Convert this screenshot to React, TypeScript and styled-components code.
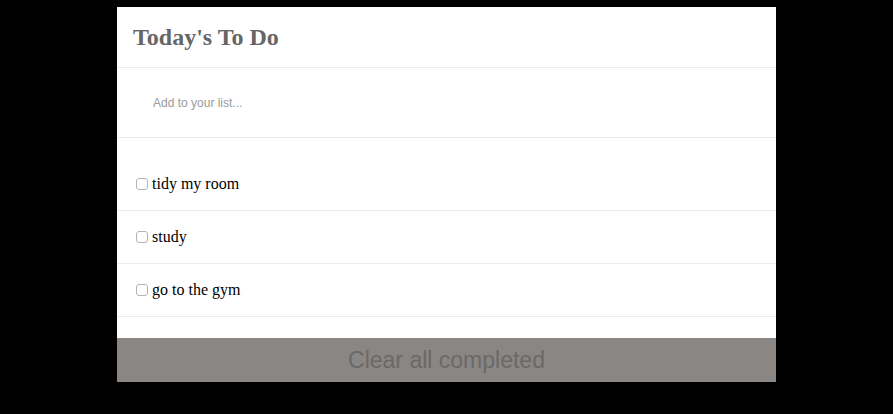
import React from "react";
import styled, { createGlobalStyle } from "styled-components";

const GlobalStyle = createGlobalStyle`
  html, body {
    margin: 0;
    padding: 0;
    background: #000;
  }
  body {
    font-family: "Liberation Serif", "Times New Roman", serif;
  }
`;

const Page = styled.div`
  display: flex;
  justify-content: center;
  align-items: flex-start;
  padding-top: 7px;
  min-height: 414px;
  box-sizing: border-box;
`;

const Card = styled.div`
  width: 659px;
  background: #fff;
  display: flex;
  flex-direction: column;
`;

const Header = styled.header`
  height: 60px;
  display: flex;
  align-items: center;
  padding: 0 16px;
  border-bottom: 1px solid #ebebeb;
`;

const Title = styled.h1`
  margin: 0;
  font-family: "Liberation Serif", "Times New Roman", serif;
  font-weight: bold;
  font-size: 24px;
  color: #666;
  line-height: 1;
`;

const InputRow = styled.div`
  height: 69px;
  display: flex;
  align-items: center;
  padding-left: 36px;
  border-bottom: 1px solid #ebebeb;
`;

const AddInput = styled.input`
  border: none;
  outline: none;
  padding: 0;
  width: 100%;
  font-family: "Liberation Sans", Arial, sans-serif;
  font-size: 12px;
  color: #333;
  background: transparent;
  &::placeholder {
    color: #9a9a9a;
  }
`;

const List = styled.ul`
  list-style: none;
  margin: 0;
  padding: 20px 0 21px;
`;

const Item = styled.li`
  height: 52px;
  display: flex;
  align-items: center;
  padding-left: 19px;
  border-bottom: 1px solid #ebebeb;
`;

const Check = styled.input`
  appearance: none;
  -webkit-appearance: none;
  width: 12px;
  height: 12px;
  margin: 0 4px 0 0;
  border: 1px solid #b4b4b4;
  border-radius: 3px;
  background: #fff;
  box-sizing: border-box;
`;

const Label = styled.span`
  font-family: "Liberation Serif", "Times New Roman", serif;
  font-size: 16px;
  color: #000;
`;

const ClearButton = styled.button`
  height: 44px;
  border: none;
  margin: 0;
  padding: 0;
  background: #8a8684;
  color: #6b6967;
  font-family: "Liberation Sans", Arial, sans-serif;
  font-size: 23px;
  display: flex;
  align-items: center;
  justify-content: center;
  cursor: pointer;
`;

const todos = ["tidy my room", "study", "go to the gym"];

export default function App() {
  return (
    <>
      <GlobalStyle />
      <Page>
        <Card>
          <Header>
            <Title>Today's To Do</Title>
          </Header>
          <InputRow>
            <AddInput placeholder="Add to your list..." />
          </InputRow>
          <List>
            {todos.map((t) => (
              <Item key={t}>
                <Check type="checkbox" />
                <Label>{t}</Label>
              </Item>
            ))}
          </List>
          <ClearButton>Clear all completed</ClearButton>
        </Card>
      </Page>
    </>
  );
}
